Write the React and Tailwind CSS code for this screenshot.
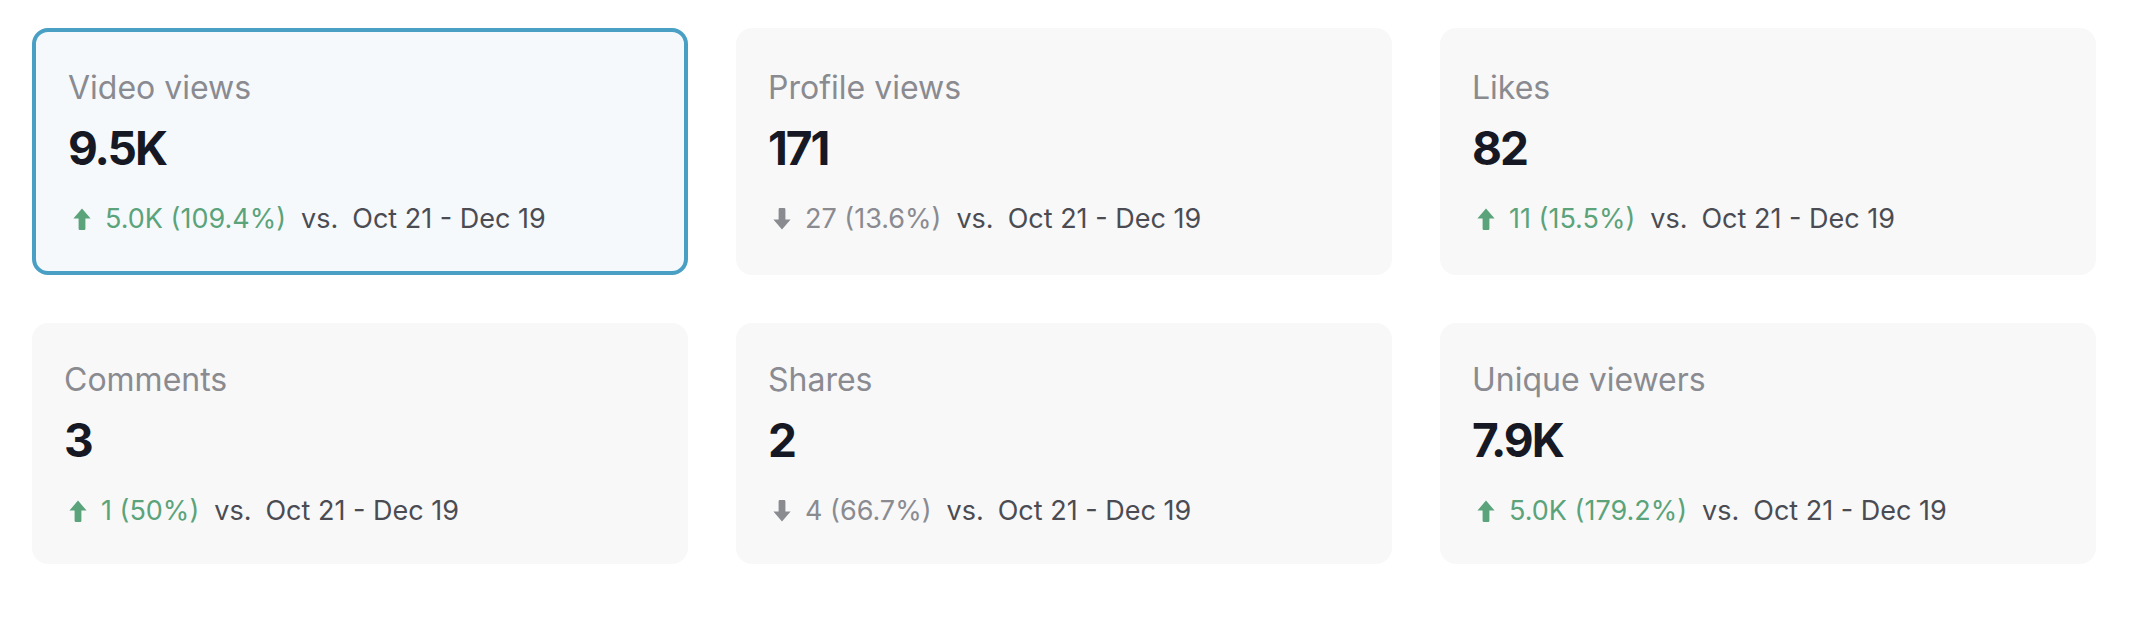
const stats = [
  { label: 'Video views', value: '9.5K', delta: '5.0K (109.4%)', up: true, active: true },
  { label: 'Profile views', value: '171', delta: '27 (13.6%)', up: false },
  { label: 'Likes', value: '82', delta: '11 (15.5%)', up: true },
  { label: 'Comments', value: '3', delta: '1 (50%)', up: true },
  { label: 'Shares', value: '2', delta: '4 (66.7%)', up: false },
  { label: 'Unique viewers', value: '7.9K', delta: '5.0K (179.2%)', up: true },
];

function TrendArrow({ up }) {
  return (
    <svg width="18" height="22" viewBox="0 0 18 22" className={up ? 'shrink-0' : 'shrink-0 rotate-180'}>
      <path d="M9 0.5 L17.6 10.6 H12.4 V20.8 a1.2 1.2 0 0 1 -1.2 1.2 H6.8 a1.2 1.2 0 0 1 -1.2 -1.2 V10.6 H0.4 Z" fill="currentColor" />
    </svg>
  );
}

function StatCard({ stat, firstRow }) {
  let box = 'rounded-[16px] px-8 ';
  if (stat.active) box += 'border-4 border-[#4aa0c4] bg-[#f5f9fc] pt-9 pb-[36px]';
  else if (firstRow) box += 'bg-[#f8f8f8] pt-10 pb-[40px]';
  else box += 'bg-[#f8f8f8] pt-[37px] pb-[37px]';

  const tone = stat.up ? 'text-[#5ba37a]' : 'text-[#8a8b91]';

  return (
    <div className={box}>
      <div className="text-[32px] leading-[40px] text-[#8a8b91]">{stat.label}</div>
      <div className="mt-3 text-[46px] leading-[56px] font-bold tracking-[-2px] text-[#161823]">{stat.value}</div>
      <div className="mt-[27px] flex items-center text-[27px] leading-[32px]">
        <span className={`ml-[5px] ${tone}`}>
          <TrendArrow up={stat.up} />
        </span>
        <span className={`ml-[14px] ${tone}`}>{stat.delta}</span>
        <span className="ml-[15px] text-[#4b4c53]">vs.</span>
        <span className="ml-[14px] text-[#4b4c53]">Oct 21 - Dec 19</span>
      </div>
    </div>
  );
}

export default function App() {
  return (
    <div className="min-h-screen bg-white pt-7 pl-8 pr-10 font-['Inter',sans-serif]">
      <div className="grid grid-cols-3 gap-12">
        {stats.map((s, i) => (
          <StatCard key={s.label} stat={s} firstRow={i < 3} />
        ))}
      </div>
    </div>
  );
}
